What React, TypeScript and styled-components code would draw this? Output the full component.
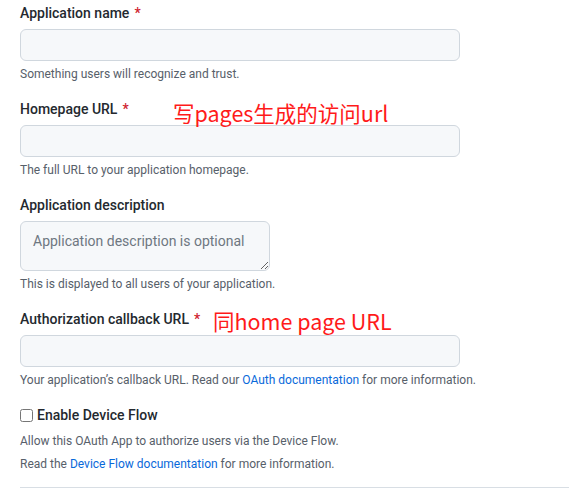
import React from 'react';
import styled, { createGlobalStyle } from 'styled-components';

const GlobalStyle = createGlobalStyle`
  html, body {
    margin: 0;
    padding: 0;
    background: #ffffff;
  }
  body {
    font-family: Roboto, "Liberation Sans", "Noto Sans CJK SC", sans-serif;
    color: #24292f;
  }
`;

const Page = styled.div`
  padding: 3px 0 0 20px;
  width: 549px;
  overflow: hidden;
`;

const Group = styled.div`
  margin-bottom: 16px;
`;

const LabelRow = styled.div`
  position: relative;
  height: 20px;
  margin-bottom: 6px;
`;

const Label = styled.label`
  font-size: 14px;
  font-weight: 500;
  line-height: 20px;
  color: #24292f;
`;

const Required = styled.span`
  color: #cf222e;
  margin-left: 5px;
`;

const Annotation = styled.span<{ $left: number; $top: number }>`
  position: absolute;
  left: ${(p) => p.$left}px;
  top: ${(p) => p.$top}px;
  font-family: "Noto Sans CJK SC", "Noto Sans", sans-serif;
  font-size: 21.5px;
  line-height: 24px;
  color: #ff1a1a;
  white-space: nowrap;
`;

const TextInput = styled.input`
  display: block;
  box-sizing: border-box;
  width: 440px;
  height: 32px;
  margin: 0;
  padding: 5px 12px;
  border: 1px solid #d0d7de;
  border-radius: 6px;
  background: #f6f8fa;
  font-family: inherit;
  font-size: 14px;
  outline: none;
`;

const TextArea = styled.textarea`
  display: block;
  box-sizing: border-box;
  width: 250px;
  height: 50px;
  margin: 0;
  padding: 9px 12px;
  border: 1px solid #d0d7de;
  border-radius: 6px;
  background: #f6f8fa;
  font-family: inherit;
  font-size: 14px;
  line-height: 20px;
  color: #24292f;
  outline: none;
  &::placeholder {
    color: #6e7781;
  }
`;

const Note = styled.p<{ $top?: number }>`
  margin: ${(p) => p.$top ?? 4}px 0 0;
  font-size: 12px;
  line-height: 18px;
  color: #57606a;
`;

const Link = styled.a`
  color: #0969da;
  text-decoration: none;
`;

const CheckRow = styled.label`
  display: flex;
  align-items: center;
  margin-top: 15px;
  height: 20px;
  font-size: 14px;
  font-weight: 500;
  color: #24292f;
`;

const Checkbox = styled.input`
  width: 13px;
  height: 13px;
  margin: 0 4px 0 0;
`;

const Divider = styled.hr`
  margin: 14px 0 0;
  border: 0;
  border-top: 1px solid #d8dee4;
`;

const App: React.FC = () => {
  return (
    <Page>
      <GlobalStyle />

      <Group>
        <LabelRow>
          <Label>
            Application name<Required>*</Required>
          </Label>
        </LabelRow>
        <TextInput type="text" />
        <Note>Something users will recognize and trust.</Note>
      </Group>

      <Group>
        <LabelRow>
          <Label>
            Homepage URL<Required>*</Required>
          </Label>
          <Annotation $left={153} $top={2}>写pages生成的访问url</Annotation>
        </LabelRow>
        <TextInput type="text" />
        <Note>The full URL to your application homepage.</Note>
      </Group>

      <Group>
        <LabelRow>
          <Label>Application description</Label>
        </LabelRow>
        <TextArea placeholder="Application description is optional" />
        <Note>This is displayed to all users of your application.</Note>
      </Group>

      <Group>
        <LabelRow>
          <Label>
            Authorization callback URL<Required>*</Required>
          </Label>
          <Annotation $left={193} $top={0}>同home page URL</Annotation>
        </LabelRow>
        <TextInput type="text" />
        <Note>
          Your application’s callback URL. Read our <Link href="#">OAuth documentation</Link> for more
          information.
        </Note>
      </Group>

      <CheckRow>
        <Checkbox type="checkbox" />
        Enable Device Flow
      </CheckRow>
      <Note $top={7}>Allow this OAuth App to authorize users via the Device Flow.</Note>
      <Note $top={5}>
        Read the <Link href="#">Device Flow documentation</Link> for more information.
      </Note>
      <Divider />
    </Page>
  );
};

export default App;
